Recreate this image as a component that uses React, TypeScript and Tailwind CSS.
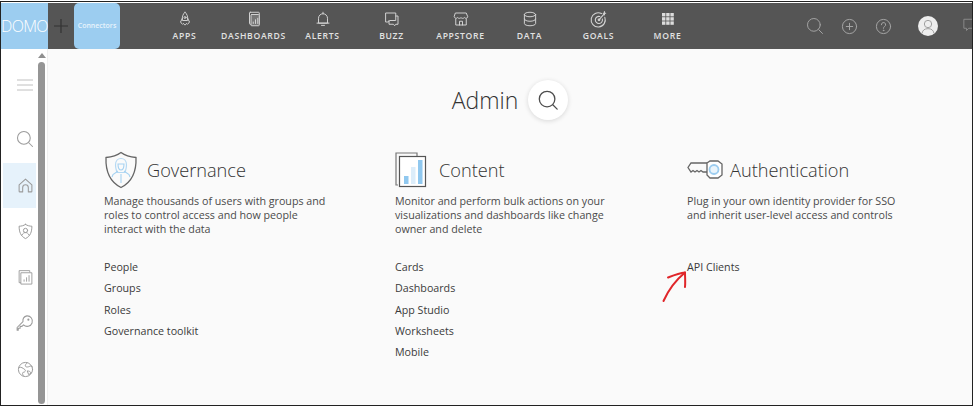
import React from "react";

const stroke = "#d4d4d4";

function NavItem({ label, children }: { label: string; children: React.ReactNode }) {
  return (
    <div className="w-[69px] shrink-0 flex flex-col items-center">
      <div className="h-[18px] flex items-center justify-center">{children}</div>
      <div className="mt-[1px] text-[8.6px] leading-[14px] font-semibold tracking-[0.7px] text-[#e2e2e2] whitespace-nowrap">{label}</div>
    </div>
  );
}

function Ic({ children, w = 18, h = 18, c = stroke, sw = 1.3 }: { children: React.ReactNode; w?: number; h?: number; c?: string; sw?: number }) {
  return (
    <svg width={w} height={h} viewBox="0 0 24 24" fill="none" stroke={c} strokeWidth={sw} strokeLinecap="round" strokeLinejoin="round">
      {children}
    </svg>
  );
}

function Links({ items }: { items: string[] }) {
  return (
    <div className="mt-[22px] flex flex-col gap-[3.3px]">
      {items.map((t) => (
        <div key={t} className="text-[10.7px] leading-[18px] text-[#3a3a3a]">{t}</div>
      ))}
    </div>
  );
}

function Column({ icon, title, lines, items, w, gap }: { icon: React.ReactNode; title: string; lines: string[]; items: string[]; w: string; gap: string }) {
  return (
    <div className={w}>
      <div className={`flex items-center h-[38px] ${gap}`}>
        {icon}
        <div className="text-[18.2px] font-light leading-[26px] text-[#333333]">{title}</div>
      </div>
      <div className="mt-[5px] h-[42px] text-[10.7px] leading-[14px] text-[#4a4a4a]">
        {lines.map((l) => (
          <div key={l} className="whitespace-nowrap">{l}</div>
        ))}
      </div>
      <Links items={items} />
    </div>
  );
}

function SideIcon({ children, active, h }: { children: React.ReactNode; active?: boolean; h: string }) {
  return (
    <div className={`${h} w-[33px] pl-[11px] flex items-center justify-center ${active ? "bg-[#e6f2fb]" : ""}`}>{children}</div>
  );
}

const g = "#9b9b9b";

export default function App() {
  return (
    <div className="relative w-[973px] h-[408px] bg-white pt-px overflow-hidden" style={{ fontFamily: '"Open Sans", sans-serif' }}>
      <div className="h-[405px] border border-[#222] flex flex-col overflow-hidden">
        <header className="h-[46px] shrink-0 bg-[#555555] flex items-stretch mt-px">
          <div className="w-[47px] shrink-0 bg-[#9ccdf0] flex items-center justify-center">
            <span className="text-[16px] font-light tracking-[-0.7px] text-white leading-none">DOMO</span>
          </div>
          <div className="w-[26px] shrink-0 flex items-center justify-center">
            <svg width="16" height="16" viewBox="0 0 16 16" stroke="#333" strokeWidth="1.2"><path d="M8 1v14M1 8h14" /></svg>
          </div>
          <div className="w-[46px] shrink-0 bg-[#9ccdf0] rounded-[5px] flex items-center justify-center">
            <span className="text-[7px] font-semibold text-[#e8f4fc]">Connectors</span>
          </div>
          <nav className="ml-[30px] pt-[7px] flex">
            <NavItem label="APPS">
              <Ic>
                <path d="M12 3c3 2.5 4 6 3.5 11h-7C8 9 9 5.500 12 3z" />
                <path d="M8.500 11 6 16l2.500 3M15.500 11l2.500 5-2.500 3" />
                <circle cx="12" cy="10" r="1.300" />
                <path d="M10 18c.5 1 1 1.500 2 2 1-.5 1.500-1 2-2" />
              </Ic>
            </NavItem>
            <NavItem label="DASHBOARDS">
              <Ic>
                <rect x="6" y="3" width="13" height="16" rx="1" />
                <rect x="8" y="6" width="11" height="15" rx="1" fill="#777" />
                <path d="M11 18v-2M14 18v-5M17 18v-7" />
              </Ic>
            </NavItem>
            <NavItem label="ALERTS">
              <Ic>
                <path d="M6 17V11a6 6 0 0 1 12 0v6z" />
                <path d="M4 17.500h16M10 20.500h4M12 3v2" />
              </Ic>
            </NavItem>
            <NavItem label="BUZZ">
              <Ic>
                <path d="M4 4h13v10H9l-2 2H4z" />
                <path d="M17 8h3v11h-3l-1.500 2-1.500-2H8v-5" />
              </Ic>
            </NavItem>
            <NavItem label="APPSTORE">
              <Ic>
                <path d="M5 4h14l2 5a2.500 2.500 0 0 1-4.500 1 2.800 2.800 0 0 1-4.500 0 2.800 2.800 0 0 1-4.500 0A2.500 2.500 0 0 1 3 9z" />
                <path d="M5 12v8h14v-8M10 20v-5h4v5" />
              </Ic>
            </NavItem>
            <NavItem label="DATA">
              <Ic>
                <ellipse cx="12" cy="6" rx="7.500" ry="3" />
                <path d="M4.500 6v12c0 1.700 3.400 3 7.500 3s7.500-1.300 7.500-3V6" />
                <path d="M4.500 12c0 1.700 3.400 3 7.500 3s7.500-1.300 7.500-3" />
              </Ic>
            </NavItem>
            <NavItem label="GOALS">
              <Ic w={20} h={20}>
                <path d="M15 5.500A8.500 8.500 0 1 0 19 10" />
                <path d="M13 9a4.300 4.300 0 1 0 3 3" />
                <circle cx="12" cy="13" r="1" />
                <path d="M12 13l7-8M17 5h3M18.500 3v4" />
              </Ic>
            </NavItem>
            <NavItem label="MORE">
              <svg width="12" height="12" viewBox="0 0 12 12" fill="#dcdcdc">
                {[0, 4.2, 8.4].flatMap((y) =>
                  [0, 4.2, 8.4].map((x) => <rect key={`${x}-${y}`} x={x} y={y} width="3.400" height="3.400" />)
                )}
              </svg>
            </NavItem>
          </nav>
          <div className="ml-[104px] flex items-center">
            <div className="w-[17px]">
              <Ic w={18} h={18} c="#a5a5a5" sw={1.300}>
                <circle cx="10.500" cy="10.500" r="8.500" />
                <path d="M17 17l5 5" />
              </Ic>
            </div>
            <div className="ml-[18px]">
              <Ic w={17} h={17} c="#a5a5a5" sw={1.400}>
                <circle cx="12" cy="12" r="10" />
                <path d="M12 7.500v9M7.500 12h9" />
              </Ic>
            </div>
            <div className="ml-[17px]">
              <Ic w={17} h={17} c="#a5a5a5" sw={1.400}>
                <circle cx="12" cy="12" r="10" />
                <path d="M9 9.500a3 3 0 1 1 4.500 2.500c-1 .6-1.500 1.200-1.500 2.500" />
                <circle cx="12" cy="17.500" r=".5" />
              </Ic>
            </div>
            <div className="ml-[26px] w-[20px] h-[20px] rounded-full bg-[#eeeeee] flex items-center justify-center overflow-hidden">
              <svg width="16" height="16" viewBox="0 0 24 24" fill="none" stroke="#a0a0a0" strokeWidth="1.500">
                <circle cx="12" cy="9" r="5.500" />
                <path d="M3 23c1-5 4-7 9-7s8 2 9 7" />
              </svg>
            </div>
            <div className="ml-[24px]">
              <Ic w={18} h={18} c="#8a8a8a">
                <path d="M3 3h17v12H9l-3 3v-3H3z" />
              </Ic>
            </div>
          </div>
        </header>
        <div className="flex-1 flex min-h-0">
          <aside className="relative w-[47px] shrink-0 bg-white border-r border-[#efefef] flex">
            <div className="w-[36px] pl-[2px] flex flex-col">
              <SideIcon h="h-[72px]">
                <svg width="16" height="14" viewBox="0 0 16 14" stroke="#c0c0c0" strokeWidth="1"><path d="M0 2h16M0 7h16M0 12h16" /></svg>
              </SideIcon>
              <SideIcon h="h-[42px] pb-[6px]">
                <Ic w={18} h={18} c={g} sw={1.400}>
                  <circle cx="10.500" cy="10.500" r="8.500" />
                  <path d="M17 17l5 5" />
                </Ic>
              </SideIcon>
              <SideIcon h="h-[45px]" active>
                <Ic w={17} h={17} c={g} sw={1.500}>
                  <path d="M3 11l9-8 9 8v9a1 1 0 0 1-1 1h-4v-6a4 4 0 0 0-8 0v6H4a1 1 0 0 1-1-1z" />
                </Ic>
              </SideIcon>
              <SideIcon h="h-[46px]">
                <Ic w={17} h={17} c={g} sw={1.400}>
                  <path d="M12 2c3 2 6 2.500 9 2.500 0 8-2 14-9 17.500-7-3.500-9-9.500-9-17.500C6 4.500 9 4 12 2z" />
                  <circle cx="12" cy="10.500" r="3" />
                  <path d="M7 17c1-2.500 3-3.500 5-3.500s4 1 5 3.500" />
                </Ic>
              </SideIcon>
              <SideIcon h="h-[46px]">
                <Ic w={17} h={18} c={g} sw={1.300}>
                  <path d="M5 20H3V3h15v2" />
                  <rect x="6" y="6" width="15" height="16" />
                  <path d="M10 18v-2M13.500 18v-5M17 18V10" />
                </Ic>
              </SideIcon>
              <SideIcon h="h-[46px]">
                <Ic w={18} h={18} c={g} sw={1.400}>
                  <path d="M14.500 2.500a7 7 0 1 1-4.500 12L8 16.500H5.500V19H3v2.500H1.500V18l7.800-7.800a7 7 0 0 1 5.200-7.700z" />
                  <circle cx="16.500" cy="7.500" r=".7" />
                </Ic>
              </SideIcon>
              <SideIcon h="h-[46px]">
                <Ic w={17} h={17} c={g} sw={1.400}>
                  <circle cx="12" cy="12" r="10" />
                  <path d="M3 9c3-1 5 1 8 3 2 1.500 0 4-2 4s-1 4 0 5M14 2.500c-1 2-3 3-2 5 1 1.500 4 1 6 0s3 0 4 1M15 14c2 0 4 1 5 3l-3 2z" />
                </Ic>
              </SideIcon>
            </div>
            <div className="w-[7px] ml-px flex flex-col items-center">
              <div className="mt-[4px] w-0 h-0 border-x-[4px] border-x-transparent border-b-[5px] border-b-[#8f8f8f]" />
              <div className="mt-[4px] w-[7px] h-[342px] rounded-full bg-[#959595]" />
            </div>
          </aside>
          <main className="relative flex-1 bg-[#fafafa] pt-[30px]">
            <div className="flex items-center justify-center gap-[10px] h-[42px]">
              <div className="text-[23px] font-light leading-[30px] text-[#333333]">Admin</div>
              <div className="w-[40px] h-[40px] rounded-full bg-white shadow-[0_1px_5px_rgba(0,0,0,0.14)] flex items-center justify-center">
                <Ic w={22} h={22} c="#4d4d4d" sw={1.400}>
                  <circle cx="11" cy="11" r="8.500" />
                  <path d="M17.500 17.500l4.500 4.500" />
                </Ic>
              </div>
            </div>
            <div className="mt-[30px] pl-[56px] flex">
              <Column
                w="w-[291px]"
                gap="gap-[9px]"
                title="Governance"
                lines={["Manage thousands of users with groups and", "roles to control access and how people", "interact with the data"]}
                items={["People", "Groups", "Roles", "Governance toolkit"]}
                icon={
                  <svg width="34" height="38" viewBox="0 0 34 38" fill="none">
                    <path d="M17 1.500c4 3 9 4.500 15 5 .5 13-3 24-15 30C5 30.500 1.500 19.500 2 6.500c6-.5 11-2 15-5z" stroke="#666" strokeWidth="1.300" />
                    <path d="M11.500 14c0-4 2.500-6.500 5.500-6.500s5.500 2.500 5.500 6.500c0 3.500-1 6-1.500 7.500H13c-.5-1.500-1.500-4-1.500-7.500z" stroke="#b5d9f3" strokeWidth="1.200" />
                    <path d="M14 13c0 3 1 6 3 6s3-3 3-6c-2 0-4 0-6 0zM14 20l-5 3.500-1 2.500M20 20l5 3.500 1 2.500M17 23v9" stroke="#a6d2f1" strokeWidth="1.100" />
                  </svg>
                }
              />
              <Column
                w="w-[292px]"
                gap="gap-[12px]"
                title="Content"
                lines={["Monitor and perform bulk actions on your", "visualizations and dashboards like change", "owner and delete"]}
                items={["Cards", "Dashboards", "App Studio", "Worksheets", "Mobile"]}
                icon={
                  <svg width="32" height="36" viewBox="0 0 32 36" fill="none">
                    <path d="M3 33H1V1h21v3" stroke="#777" strokeWidth="1.200" />
                    <rect x="4.500" y="4.500" width="26" height="30" stroke="#555" strokeWidth="1.200" fill="#fff" />
                    <rect x="9" y="24" width="4.500" height="8" fill="#90c8ef" />
                    <rect x="16" y="15" width="4.500" height="17" fill="#dcedfa" />
                    <rect x="23" y="8" width="4.500" height="24" fill="#90c8ef" />
                  </svg>
                }
              />
              <Column
                w="w-[240px]"
                gap="gap-[7px]"
                title="Authentication"
                lines={["Plug in your own identity provider for SSO", "and inherit user-level access and controls"]}
                items={["API Clients"]}
                icon={
                  <svg width="36" height="20" viewBox="0 0 36 20" fill="none">
                    <path d="M20 3H4L1 7.500 4 12l2-1.500 2 1.500 2-1.500 2 1.500 2-1.500 2 1.500h4" stroke="#666" strokeWidth="1.300" />
                    <path d="M20 3l3-2h8l4 3v11l-4 3h-8l-3-3z" stroke="#666" strokeWidth="1.300" fill="#fff" />
                    <circle cx="27" cy="9.500" r="4.500" stroke="#9ccdf0" strokeWidth="1.800" fill="#eaf5fc" />
                  </svg>
                }
              />
            </div>
          </main>
        </div>
      </div>
      <svg className="absolute left-[660px] top-[268px]" width="30" height="36" viewBox="0 0 30 36" fill="none" stroke="#e0262a" strokeWidth="2" strokeLinecap="round" strokeLinejoin="round">
        <path d="M3.500 33c4-9 10-19 21.500-28.500" />
        <path d="M8 9.500c5-2 11-4.500 17-5 0 5 .5 10 0 14.500" />
      </svg>
    </div>
  );
}
